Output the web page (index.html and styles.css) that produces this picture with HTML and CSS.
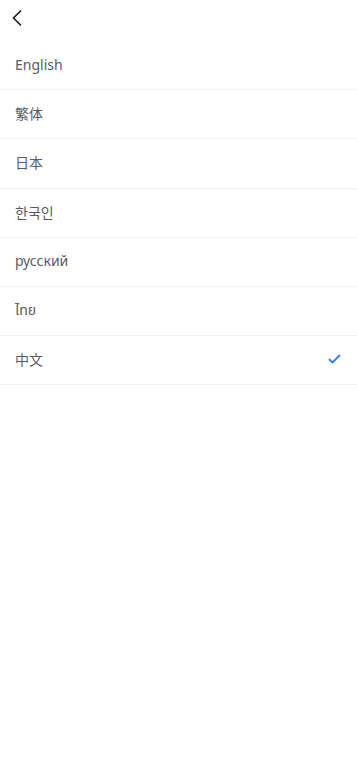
FILE: index.html
```html
<!DOCTYPE html>
<html lang="zh">
<head>
    <meta charset="UTF-8">
    <meta name="viewport" content="width=device-width, initial-scale=1.0">
    <title>Language</title>
    <link rel="stylesheet" href="styles.css">
</head>
<body>
    <div class="header">
        <svg class="back" width="12" height="18" viewBox="0 0 12 18">
            <path d="M10 1.5 L2.5 9 L10 16.5" fill="none" stroke="#111" stroke-width="1.5"/>
        </svg>
    </div>
    <ul class="lang-list">
        <li class="lang-item">English</li>
        <li class="lang-item">繁体</li>
        <li class="lang-item">日本</li>
        <li class="lang-item">한국인</li>
        <li class="lang-item">русский</li>
        <li class="lang-item">ไทย</li>
        <li class="lang-item active">中文
            <svg class="check" width="13" height="10" viewBox="0 0 13 10">
                <path d="M1 5 L4.5 8.5 L12 1" fill="none" stroke="#2d7bfb" stroke-width="1.8"/>
            </svg>
        </li>
    </ul>
</body>
</html>
```

FILE: styles.css
```css
* {
    box-sizing: border-box;
}
body {
    margin: 0;
    background-color: #ffffff;
    font-family: 'Noto Sans', 'Noto Sans CJK SC', 'Noto Sans Thai', sans-serif;
    color: #565a66;
}
.header {
    height: 41px;
    padding: 9px 0 0 11px;
}
.back {
    display: block;
}
.lang-list {
    list-style: none;
    margin: 0;
    padding: 0;
}
.lang-item {
    height: 49.2px;
    padding: 0 15px 2px;
    display: flex;
    align-items: center;
    justify-content: space-between;
    font-size: 14px;
    border-bottom: 1px solid #f0f0f2;
}
.check {
    margin-right: 1px;
}
```
